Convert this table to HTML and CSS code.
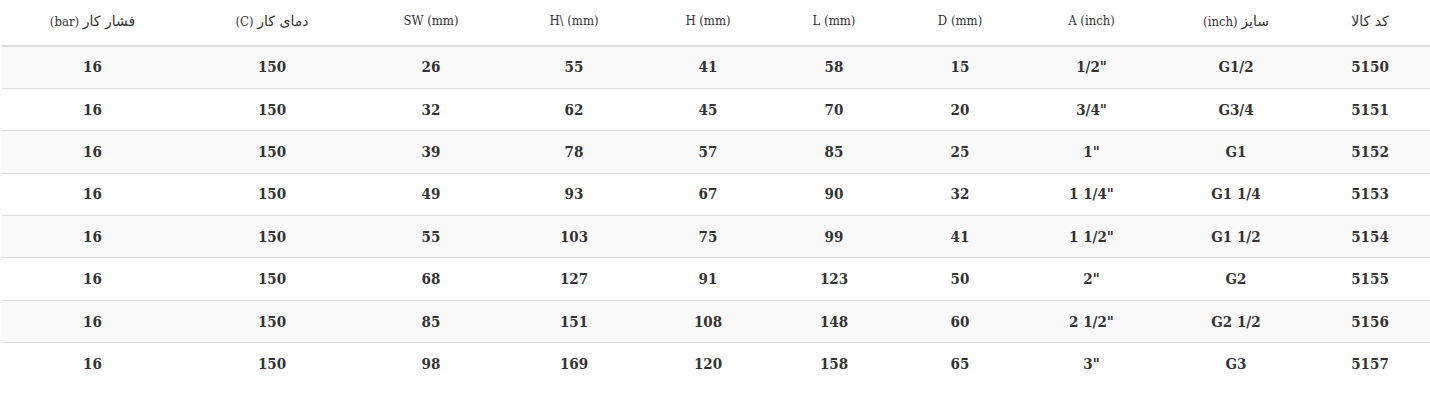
FILE: index.html
```html
<!DOCTYPE html>
<html lang="fa" dir="rtl">
<head>
<meta charset="utf-8">
<title>جدول مشخصات</title>
<link rel="stylesheet" href="styles.css">
</head>
<body>
<div class="wrap">
<table class="spec">
<colgroup>
<col class="c1"><col class="c2"><col class="c3"><col class="c4"><col class="c5"><col class="c6"><col class="c7"><col class="c8"><col class="c9"><col class="c10">
</colgroup>
<thead>
<tr>
<th><span class="fa">کد کالا</span></th>
<th><span class="fa">سایز</span> (inch)</th>
<th>A (inch)</th>
<th>D (mm)</th>
<th>L (mm)</th>
<th>H (mm)</th>
<th>H\ (mm)</th>
<th>SW (mm)</th>
<th><span class="fa">دمای کار</span> (C)</th>
<th><span class="fa">فشار کار</span> (bar)</th>
</tr>
</thead>
<tbody>
<tr><td>5150</td><td>G1/2</td><td class="ltr">1/2"</td><td>15</td><td>58</td><td>41</td><td>55</td><td>26</td><td>150</td><td>16</td></tr>
<tr><td>5151</td><td>G3/4</td><td class="ltr">3/4"</td><td>20</td><td>70</td><td>45</td><td>62</td><td>32</td><td>150</td><td>16</td></tr>
<tr><td>5152</td><td>G1</td><td class="ltr">1"</td><td>25</td><td>85</td><td>57</td><td>78</td><td>39</td><td>150</td><td>16</td></tr>
<tr><td>5153</td><td>G1 1/4</td><td class="ltr">1 1/4"</td><td>32</td><td>90</td><td>67</td><td>93</td><td>49</td><td>150</td><td>16</td></tr>
<tr><td>5154</td><td>G1 1/2</td><td class="ltr">1 1/2"</td><td>41</td><td>99</td><td>75</td><td>103</td><td>55</td><td>150</td><td>16</td></tr>
<tr><td>5155</td><td>G2</td><td class="ltr">2"</td><td>50</td><td>123</td><td>91</td><td>127</td><td>68</td><td>150</td><td>16</td></tr>
<tr><td>5156</td><td>G2 1/2</td><td class="ltr">2 1/2"</td><td>60</td><td>148</td><td>108</td><td>151</td><td>85</td><td>150</td><td>16</td></tr>
<tr><td>5157</td><td>G3</td><td class="ltr">3"</td><td>65</td><td>158</td><td>120</td><td>169</td><td>98</td><td>150</td><td>16</td></tr>
</tbody>
</table>
</div>
</body>
</html>
```
FILE: styles.css
```css
html, body {
  margin: 0;
  padding: 0;
  background: #fff;
}
body {
  font-family: "DejaVu Serif Condensed", "DejaVu Serif", "DejaVu Sans", serif;
  font-stretch: condensed;
  color: #333;
}
.wrap {
  padding-left: 2px;
}
.spec {
  width: 1428px;
  border-collapse: collapse;
  table-layout: fixed;
  direction: rtl;
}
.c1 { width: 120px; }
.c2 { width: 148px; }
.c3 { width: 141px; }
.c4 { width: 122px; }
.c5 { width: 130px; }
.c6 { width: 122px; }
.c7 { width: 146px; }
.c8 { width: 140px; }
.c9 { width: 178px; }
.c10 { width: 181px; }
.spec th {
  height: 46px;
  padding: 0 8px 4px;
  box-sizing: border-box;
  font-size: 13px;
  font-weight: normal;
  text-align: center;
  vertical-align: middle;
  border-bottom: 2px solid #ddd;
  white-space: nowrap;
}
.spec th .fa {
  font-family: "DejaVu Sans", sans-serif;
  font-stretch: normal;
  font-size: 14px;
}
.spec td {
  height: 42.4px;
  box-sizing: border-box;
  padding: 0 8px;
  font-size: 15px;
  font-weight: bold;
  text-align: center;
  vertical-align: middle;
  border-top: 1px solid #ddd;
  white-space: nowrap;
}
.spec td.ltr {
  direction: ltr;
}
.spec tbody tr:nth-child(odd) {
  background: #f9f9f9;
}
```
